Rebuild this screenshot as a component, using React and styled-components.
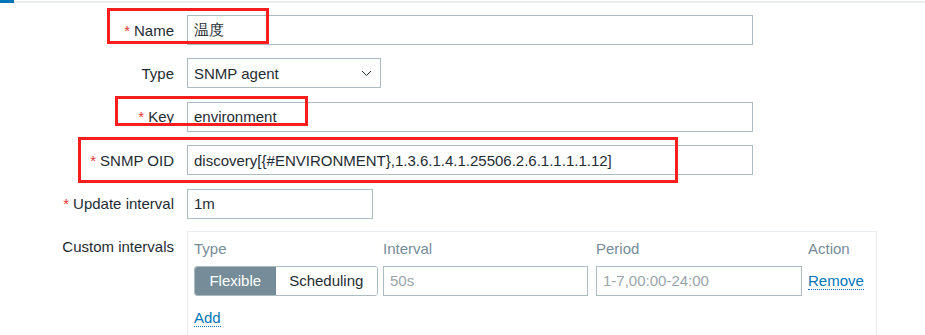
import React from "react";
import styled, { createGlobalStyle } from "styled-components";

const GlobalStyle = createGlobalStyle`
  body {
    margin: 0;
    background: #ffffff;
    font-family: "Liberation Sans", Arial, sans-serif;
    font-size: 15px;
    color: #1f2c33;
  }
`;

const Page = styled.div`
  position: relative;
  width: 925px;
  height: 335px;
  overflow: hidden;
`;

const TabStrip = styled.div`
  display: flex;
  height: 3px;
  .active {
    width: 14px;
    height: 3px;
    background: #0275b8;
  }
  .rest {
    flex: 1;
    height: 2px;
    margin-top: 1px;
    background: #ebeef0;
  }
`;

const Form = styled.div`
  display: grid;
  grid-template-columns: 174px 1fr;
  column-gap: 13px;
  row-gap: 13.4px;
  padding-top: 12px;
`;

const Label = styled.div`
  display: flex;
  justify-content: flex-end;
  align-items: ${({ $top }) => ($top ? "flex-start" : "center")};
  padding-top: ${({ $top }) => ($top ? "6px" : "0")};
  height: ${({ $top }) => ($top ? "auto" : "30px")};
  white-space: nowrap;
  .req {
    color: #e33734;
    margin-right: 4px;
  }
`;

const Field = styled.div`
  width: ${({ $w }) => $w}px;
  height: 30px;
  box-sizing: border-box;
  border: 1px solid #acbbc2;
  background: #fff;
  display: flex;
  align-items: center;
  justify-content: space-between;
  padding: 0 8px 0 6px;
  color: ${({ $placeholder }) => ($placeholder ? "#9aa5ab" : "#1f2c33")};
  white-space: nowrap;
`;

const Table = styled.div`
  width: 690px;
  box-sizing: border-box;
  border: 1px solid #ebeef0;
  border-bottom: none;
  padding: 0 0 20px 6px;
  height: 120px;
  margin-top: -1px;
`;

const TableRow = styled.div`
  display: grid;
  grid-template-columns: 189px 213px 212px auto;
  align-items: center;
  height: ${({ $h }) => $h}px;
`;

const HeadCell = styled.div`
  color: #768d99;
`;

const Toggle = styled.div`
  display: flex;
  width: 184px;
  height: 30px;
  box-sizing: border-box;
  border: 1px solid #acbbc2;
  border-radius: 3px;
  overflow: hidden;
`;

const ToggleButton = styled.div`
  display: flex;
  align-items: center;
  justify-content: center;
  width: ${({ $w }) => $w}px;
  background: ${({ $on }) => ($on ? "#768d99" : "#ffffff")};
  color: ${({ $on }) => ($on ? "#ffffff" : "#1f2c33")};
`;

const Link = styled.span`
  color: #0275b8;
  border-bottom: 1px dotted #0275b8;
  line-height: 17px;
`;

const AddRow = styled.div`
  padding-top: 13px;
`;

const Mark = styled.div`
  position: absolute;
  left: ${({ $x }) => $x}px;
  top: ${({ $y }) => $y}px;
  width: ${({ $w }) => $w}px;
  height: ${({ $h }) => $h}px;
  box-sizing: border-box;
  border: 3px solid #f81e1e;
  pointer-events: none;
`;

const Chevron = () => (
  <svg width="11" height="7" viewBox="0 0 11 7">
    <path d="M1 1 L5.5 5.5 L10 1" fill="none" stroke="#1f2c33" strokeWidth="1" />
  </svg>
);

const Required = ({ children }) => (
  <Label>
    <span className="req">*</span>
    {children}
  </Label>
);

const App = () => {
  return (
    <Page>
      <GlobalStyle />
      <TabStrip>
        <div className="active" />
        <div className="rest" />
      </TabStrip>
      <Form>
        <Required>Name</Required>
        <Field $w={566}>温度</Field>

        <Label>Type</Label>
        <Field $w={194}>
          SNMP agent
          <Chevron />
        </Field>

        <Required>Key</Required>
        <Field $w={566}>environment</Field>

        <Required>SNMP OID</Required>
        <Field $w={566}>discovery[{"{#ENVIRONMENT}"},1.3.6.1.4.1.25506.2.6.1.1.1.1.12]</Field>

        <Required>Update interval</Required>
        <Field $w={186}>1m</Field>

        <Label $top>Custom intervals</Label>
        <Table>
          <TableRow $h={34}>
            <HeadCell>Type</HeadCell>
            <HeadCell>Interval</HeadCell>
            <HeadCell>Period</HeadCell>
            <HeadCell>Action</HeadCell>
          </TableRow>
          <TableRow $h={30}>
            <Toggle>
              <ToggleButton $on $w={81}>Flexible</ToggleButton>
              <ToggleButton $w={102}>Scheduling</ToggleButton>
            </Toggle>
            <Field $w={205} $placeholder>50s</Field>
            <Field $w={206} $placeholder>1-7,00:00-24:00</Field>
            <div>
              <Link>Remove</Link>
            </div>
          </TableRow>
          <AddRow>
            <Link>Add</Link>
          </AddRow>
        </Table>
      </Form>
      <Mark $x={107} $y={8} $w={162} $h={36} />
      <Mark $x={115} $y={96} $w={193} $h={30} />
      <Mark $x={78} $y={137} $w={600} $h={46} />
    </Page>
  );
};

export default App;
